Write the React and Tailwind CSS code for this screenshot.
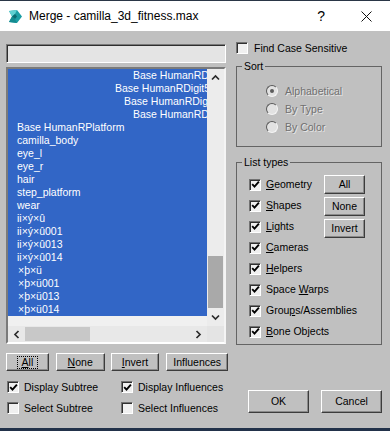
import React from "react";

const F = { fontFamily: '"Liberation Sans", Arial, sans-serif' };

function Chevron({ dir }) {
  const vertical = dir === "up" || dir === "down";
  const d = {
    up: "M1 5.5 L4.5 2 L8 5.5",
    down: "M1 1.5 L4.5 5 L8 1.5",
    left: "M5.5 1 L2 4.5 L5.5 8",
    right: "M1.5 1 L5 4.5 L1.5 8",
  }[dir];
  return (
    <svg width={vertical ? 9 : 7} height={vertical ? 7 : 9} viewBox={vertical ? "0 0 9 7" : "0 0 7 9"}>
      <path d={d} stroke="#2b2b2b" strokeWidth="1.7" fill="none" />
    </svg>
  );
}

function Check({ checked }) {
  return (
    <span className="inline-flex w-[12px] h-[12px] shrink-0 items-center justify-center bg-[#f0f0f0] border border-t-[#727272] border-l-[#727272] border-b-white border-r-white shadow-[inset_1px_1px_0_#303030]">
      {checked && (
        <svg width="9" height="9" viewBox="0 0 9 9">
          <path d="M1.2 4.2 L3.5 6.6 L7.9 1.6" stroke="#000" strokeWidth="1.9" fill="none" />
        </svg>
      )}
    </span>
  );
}

function Radio({ selected }) {
  return (
    <span className="inline-flex w-[12px] h-[12px] shrink-0 items-center justify-center rounded-full bg-[#e2e2e2] border border-t-[#5a5a5a] border-l-[#5a5a5a] border-b-[#f4f4f4] border-r-[#f4f4f4]">
      {selected && <span className="w-[4px] h-[4px] rounded-full bg-[#5c5c5c]" />}
    </span>
  );
}

function Btn({ children, className }) {
  return (
    <button
      className={
        "flex items-center justify-center bg-[#c0c0c0] border border-t-white border-l-white border-b-[#3c3c3c] border-r-[#3c3c3c] shadow-[inset_-1px_-1px_0_#8a8a8a] text-[10.5px] leading-none text-black p-0 " +
        className
      }
      style={F}
    >
      {children}
    </button>
  );
}

const rows = [
  { t: "Base HumanRDigit51", cls: "pl-[125px]" },
  { t: "Base HumanRDigit52", cls: "pl-[107px]" },
  { t: "Base HumanRDigit53", cls: "pl-[116px]" },
  { t: "Base HumanRDigit54", cls: "pl-[125px]" },
  { t: "Base HumanRPlatform", cls: "pl-[9px]" },
  { t: "camilla_body", cls: "pl-[9px]" },
  { t: "eye_l", cls: "pl-[9px]" },
  { t: "eye_r", cls: "pl-[9px]" },
  { t: "hair", cls: "pl-[9px]" },
  { t: "step_platform", cls: "pl-[9px]" },
  { t: "wear", cls: "pl-[9px]" },
  { t: "ii×ý×û", cls: "pl-[9px]" },
  { t: "ii×ý×û001", cls: "pl-[9px]" },
  { t: "ii×ý×û013", cls: "pl-[9px]" },
  { t: "ii×ý×û014", cls: "pl-[9px]" },
  { t: "×þ×ü", cls: "pl-[10px]" },
  { t: "×þ×ü001", cls: "pl-[10px]" },
  { t: "×þ×ü013", cls: "pl-[10px]" },
  { t: "×þ×ü014", cls: "pl-[10px]" },
];

const U = ({ children }) => <span className="underline underline-offset-[1px]">{children}</span>;

const types = [
  <><U>G</U>eometry</>,
  <><U>S</U>hapes</>,
  <><U>L</U>ights</>,
  <><U>C</U>ameras</>,
  <><U>H</U>elpers</>,
  <>Space <U>W</U>arps</>,
  <>Grou<U>p</U>s/Assemblies</>,
  <><U>B</U>one Objects</>,
];

export default function App() {
  return (
    <div className="w-[390px] h-[431px] flex flex-col bg-[#c0c0c0] text-black overflow-hidden" style={F}>
      {/* Title bar */}
      <div className="h-[31px] shrink-0 bg-white border-t border-[#2a3646] flex items-center pl-[8px]">
        <svg width="15" height="15" viewBox="0 0 15 15" className="mt-[1px]">
          <path d="M1 2 L9 1 L14 7.5 L9 14 L1 13 L4 7.5 Z" fill="#1c9ea4" />
          <path d="M1 2 L9 1 L7 5 L4 7.5 Z" fill="#5fd0d2" />
          <path d="M4 7.5 L7 5 L9 7.5 L7 10 Z" fill="#0c6a70" />
          <path d="M1 13 L4 7.5 L7 10 L9 14 Z" fill="#138b90" />
        </svg>
        <span className="ml-[6px] text-[12px] leading-none">Merge - camilla_3d_fitness.max</span>
        <span className="ml-auto text-[14px] leading-none mr-[36px]">?</span>
        <svg width="11" height="11" viewBox="0 0 11 11" className="mr-[18px]">
          <path d="M0.5 0.5 L10.5 10.5 M10.5 0.5 L0.5 10.5" stroke="#111" strokeWidth="1" />
        </svg>
      </div>

      {/* Body */}
      <div className="flex-1 flex pl-[6px]">
        {/* Left column */}
        <div className="w-[222px] flex flex-col pt-[13px]">
          <div className="w-[220px] h-[19px] bg-[#e4e4e4] border border-t-[#7a7a7a] border-l-[#7a7a7a] border-b-white border-r-white shadow-[inset_1px_1px_0_#2e2e2e]" />
          <div className="mt-[4px] w-[220px] h-[277px] border-2 border-t-[#7a7a7a] border-l-[#7a7a7a] border-b-white border-r-[#f4f4f4] grid grid-cols-[199px_17px] grid-rows-[257px_16px]">
            <div className="bg-[#f0f0f0] overflow-hidden">
              {rows.map((r, i) => (
                <div
                  key={i}
                  className={"h-[13px] bg-[#3266c6] text-white text-[10.5px] leading-[13px] whitespace-nowrap overflow-hidden " + r.cls}
                >
                  {r.t}
                </div>
              ))}
            </div>
            <div className="bg-[#ececec] flex flex-col">
              <div className="h-[17px] flex items-center justify-center">
                <Chevron dir="up" />
              </div>
              <div className="flex-1">
                <div className="mt-[170px] h-[52px] mx-[1px] bg-[#a9a9a9]" />
              </div>
              <div className="h-[17px] flex items-center justify-center">
                <Chevron dir="down" />
              </div>
            </div>
            <div className="bg-[#e8e8e8] flex">
              <div className="w-[17px] flex items-center justify-center">
                <Chevron dir="left" />
              </div>
              <div className="flex-1 flex py-[1px]">
                <div className="w-[65px] bg-[#c8c8c8]" />
              </div>
              <div className="w-[17px] flex items-center justify-center">
                <Chevron dir="right" />
              </div>
            </div>
            <div className="bg-[#e4e4e4]" />
          </div>

          <div className="mt-[9px] flex h-[18px]">
            <Btn className="w-[43px] h-[18px]">
              <span className="border border-dotted border-black px-[4px] leading-[11px]">
                <U>A</U>ll
              </span>
            </Btn>
            <Btn className="w-[49px] h-[18px] ml-[7px]">
              <U>N</U>one
            </Btn>
            <Btn className="w-[49px] h-[18px] ml-[6px]">
              <U>I</U>nvert
            </Btn>
            <Btn className="w-[62px] h-[18px] ml-[7px]">Influences</Btn>
          </div>

          <div className="mt-[9px] flex flex-col gap-[7px] text-[10.5px] leading-none pl-[1px]">
            <div className="flex h-[14px] items-center">
              <div className="w-[114px] flex items-center">
                <Check checked />
                <span className="ml-[5px]">Display Subtree</span>
              </div>
              <div className="flex items-center">
                <Check checked />
                <span className="ml-[5px]">Display Influences</span>
              </div>
            </div>
            <div className="flex h-[14px] items-center">
              <div className="w-[114px] flex items-center">
                <Check />
                <span className="ml-[5px]">Select Subtree</span>
              </div>
              <div className="flex items-center">
                <Check />
                <span className="ml-[5px]">Select Influences</span>
              </div>
            </div>
          </div>
        </div>

        {/* Right column */}
        <div className="ml-[8px] w-[146px] flex flex-col pt-[10px] text-[10.5px] leading-none">
          <div className="h-[14px] flex items-center">
            <Check />
            <span className="ml-[6px]">Find Case Sensitive</span>
          </div>

          <fieldset className="mt-[5px] border border-[#646464] p-0 m-0 min-w-0">
            <legend className="ml-[5px] px-[2px] leading-[13px]">Sort</legend>
            <div className="pl-[29px] pt-[9px] pb-[10px]">
              {[
                ["Alphabetical", true],
                ["By Type", false],
                ["By Color", false],
              ].map(([t, s]) => (
                <div key={t} className="h-[18px] flex items-center">
                  <Radio selected={s} />
                  <span className="ml-[7px] text-[#707070] [text-shadow:1px_1px_0_#e6e6e6]">{t}</span>
                </div>
              ))}
            </div>
          </fieldset>

          <fieldset className="mt-[9px] border border-[#646464] p-0 m-0 min-w-0">
            <legend className="ml-[5px] px-[2px] leading-[13px]">List types</legend>
            <div className="grid pl-[12px] pr-[16px] pt-[5px] pb-[2px]">
              <div className="col-start-1 row-start-1 flex flex-col">
                {types.map((t, i) => (
                  <div key={i} className="h-[21px] flex items-center whitespace-nowrap">
                    <Check checked />
                    <span className="ml-[5px]">{t}</span>
                  </div>
                ))}
              </div>
              <div className="col-start-1 row-start-1 justify-self-end self-start flex flex-col gap-[3px] pt-[1px]">
                <Btn className="w-[41px] h-[19px]">All</Btn>
                <Btn className="w-[41px] h-[19px]">None</Btn>
                <Btn className="w-[41px] h-[19px]">Invert</Btn>
              </div>
            </div>
          </fieldset>

          <div className="mt-[45px] flex justify-end gap-[12px]">
            <Btn className="w-[61px] h-[23px]">OK</Btn>
            <Btn className="w-[61px] h-[23px]">Cancel</Btn>
          </div>
        </div>
      </div>

      <div className="h-[3px] shrink-0 bg-[#22324a]" />
    </div>
  );
}
